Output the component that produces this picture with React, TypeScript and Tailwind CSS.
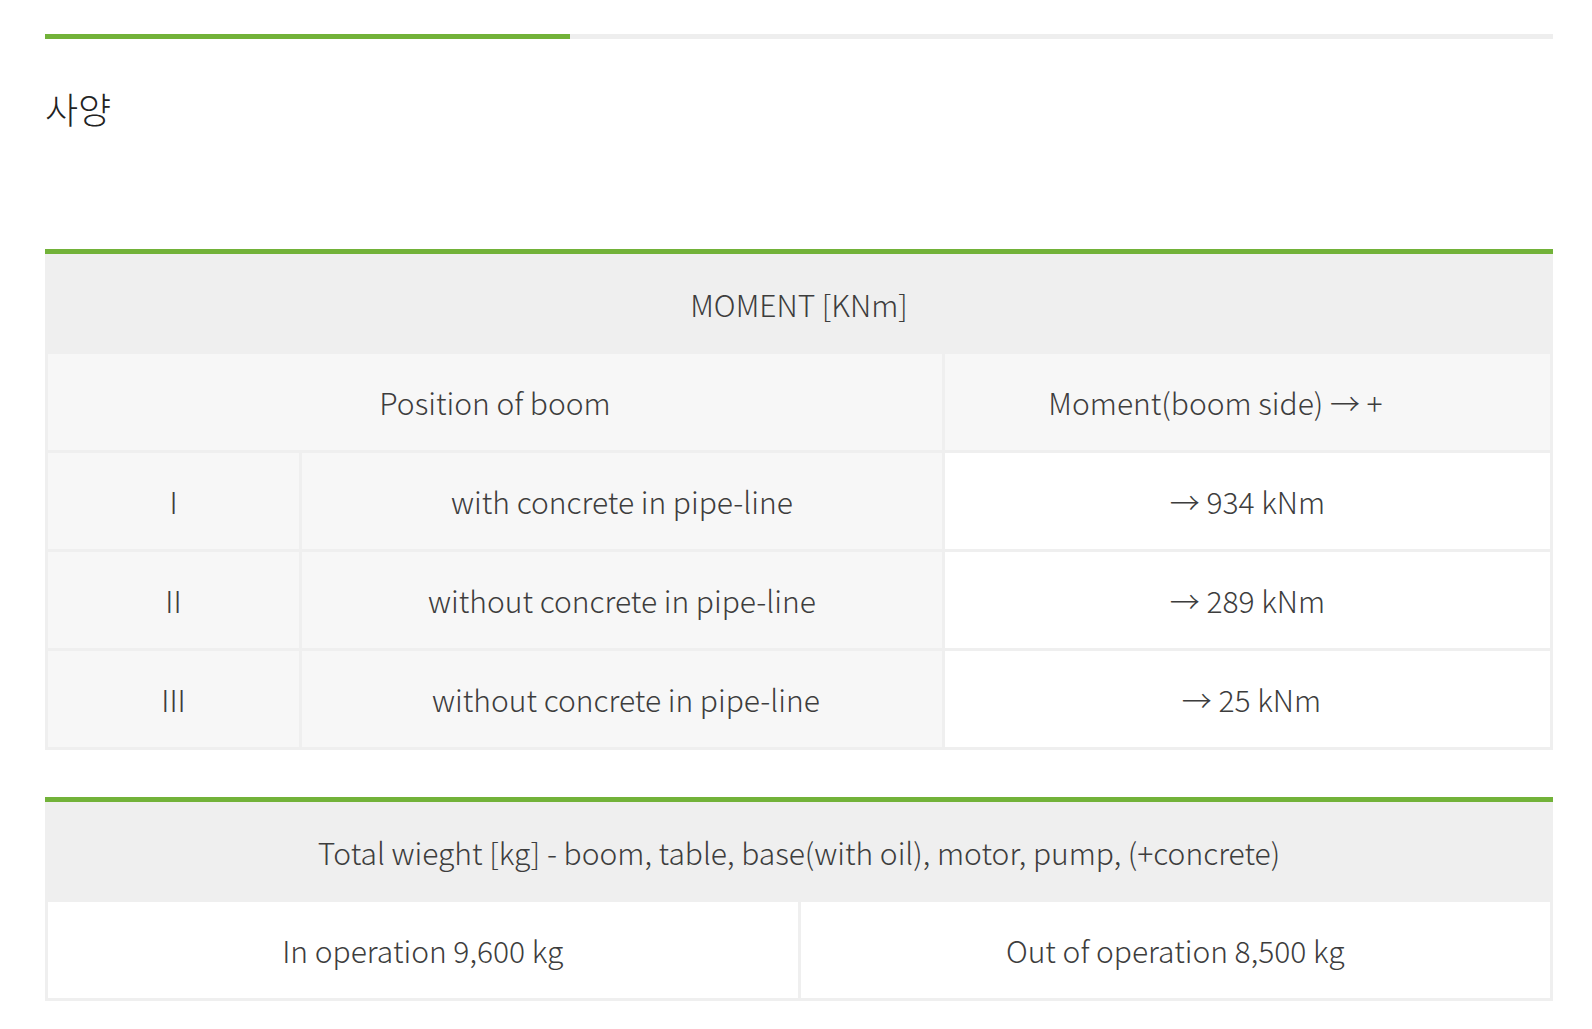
import React from 'react';

const font = { fontFamily: '"Noto Sans CJK KR", "Noto Sans", sans-serif' };

const momentRows = [
  { no: 'I', label: 'with concrete in pipe-line', value: '→ 934 kNm', shift: '' },
  { no: 'II', label: 'without concrete in pipe-line', value: '→ 289 kNm', shift: '' },
  { no: 'III', label: 'without concrete in pipe-line', value: '→ 25 kNm', shift: 'pl-[8px]' },
];

const Cell = ({ children, className = '' }: { children: React.ReactNode; className?: string }) => (
  <div className={`h-[96px] flex items-center justify-center text-[30px] font-light text-[#3d3d3d] ${className}`}>
    {children}
  </div>
);

const App = () => {
  return (
    <div className="min-h-screen bg-white" style={font}>
      <div className="ml-[45px] w-[1508px] pt-[34px]">
        {/* progress bar */}
        <div className="h-[5px] bg-[#eeeeee] flex">
          <div className="h-full w-[525px] bg-[#72b239]" />
        </div>

        <h2 className="mt-[45px] text-[36px] font-light text-[#222] leading-[48px]">사양</h2>

        {/* Moment table */}
        <div className="mt-[117px] border-t-[5px] border-[#72b239] bg-[#efefef] px-[3px] pb-[3px]">
          <div className="h-[100px] flex items-center justify-center text-[30px] font-light text-[#3d3d3d]">
            MOMENT [KNm]
          </div>
          <div className="grid grid-cols-[251px_640px_1fr] gap-[3px]">
            <Cell className="col-span-2 bg-[#f7f7f7]">Position of boom</Cell>
            <Cell className="bg-[#f7f7f7] pr-[64px]">Moment(boom side) → +</Cell>
            {momentRows.map((row) => (
              <React.Fragment key={row.no}>
                <Cell className="bg-[#f7f7f7]">{row.no}</Cell>
                <Cell className={`bg-[#f7f7f7] ${row.shift}`}>{row.label}</Cell>
                <Cell className={`bg-white ${row.shift}`}>{row.value}</Cell>
              </React.Fragment>
            ))}
          </div>
        </div>

        {/* Weight table */}
        <div className="mt-[47px] border-t-[5px] border-[#72b239] bg-[#efefef] px-[3px] pb-[3px]">
          <div className="h-[100px] flex items-center justify-center text-[30px] font-light text-[#3d3d3d]">
            Total wieght [kg] - boom, table, base(with oil), motor, pump, (+concrete)
          </div>
          <div className="grid grid-cols-2 gap-[3px]">
            <Cell className="bg-white">In operation 9,600 kg</Cell>
            <Cell className="bg-white">Out of operation 8,500 kg</Cell>
          </div>
        </div>
      </div>
    </div>
  );
};

export default App;
